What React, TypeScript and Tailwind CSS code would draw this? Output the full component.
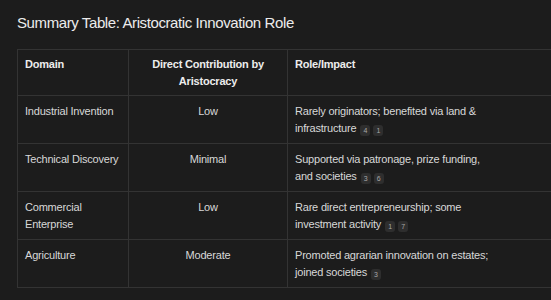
import React from 'react';

type Row = {
  domain: string;
  level: string;
  role: string;
  cites: string[];
};

const rows: Row[] = [
  { domain: 'Industrial Invention', level: 'Low', role: 'Rarely originators; benefited via land & infrastructure', cites: ['4', '1'] },
  { domain: 'Technical Discovery', level: 'Minimal', role: 'Supported via patronage, prize funding, and societies', cites: ['3', '6'] },
  { domain: 'Commercial Enterprise', level: 'Low', role: 'Rare direct entrepreneurship; some investment activity', cites: ['1', '7'] },
  { domain: 'Agriculture', level: 'Moderate', role: 'Promoted agrarian innovation on estates; joined societies', cites: ['3'] },
];

// little citation pill
const Cite: React.FC<{ n: string; first: boolean }> = ({ n, first }) => (
  <span
    className={`${first ? 'ml-[4px]' : 'ml-[3px]'} inline-flex h-[11px] w-[10px] items-center justify-center rounded-[3px] bg-[#2e2e2e] align-[-1px] text-[7px] font-medium leading-none tracking-normal text-[#a8a8a8]`}
  >
    {n}
  </span>
);

const App: React.FC = () => {
  return (
    <div className="h-[300px] w-[551px] overflow-hidden bg-[#1c1c1c] font-['Liberation_Sans',sans-serif] text-[#d8d8d8]">
      <h2 className="pl-[17px] pt-[13px] text-[15px] leading-[20px] font-medium tracking-[-0.4px] text-[#ececec]">
        Summary Table: Aristocratic Innovation Role
      </h2>

      <table className="ml-[17px] mt-[16px] w-[600px] table-fixed border-collapse text-[11px] leading-[17px] tracking-[-0.2px]">
        <colgroup>
          <col className="w-[111px]" />
          <col className="w-[159px]" />
          <col className="w-[330px]" />
        </colgroup>
        <thead>
          <tr>
            <th className="border-y border-l border-[#333] px-[7px] pt-[6px] pb-[5px] text-left align-top font-bold text-[#ededed]">Domain</th>
            <th className="border-y border-l border-[#333] px-[7px] pt-[6px] pb-[5px] text-center align-top font-bold text-[#ededed]">Direct Contribution by Aristocracy</th>
            <th className="border-y border-l border-[#333] px-[7px] pt-[6px] pb-[5px] text-left align-top font-bold text-[#ededed]">Role/Impact</th>
          </tr>
        </thead>
        <tbody>
          {rows.map((r) => (
            <tr key={r.domain}>
              <td className="border-y border-l border-[#333] px-[7px] pt-[7px] pb-[6px] align-top">{r.domain}</td>
              <td className="border-y border-l border-[#333] px-[7px] pt-[7px] pb-[6px] text-center align-top">{r.level}</td>
              <td className="border-y border-l border-[#333] px-[7px] pt-[7px] pb-[6px] align-top">
                <div className="w-[198px]">
                  {r.role}
                  {r.cites.map((c, i) => (
                    <Cite key={i} n={c} first={i === 0} />
                  ))}
                </div>
              </td>
            </tr>
          ))}
        </tbody>
      </table>
    </div>
  );
};

export default App;
